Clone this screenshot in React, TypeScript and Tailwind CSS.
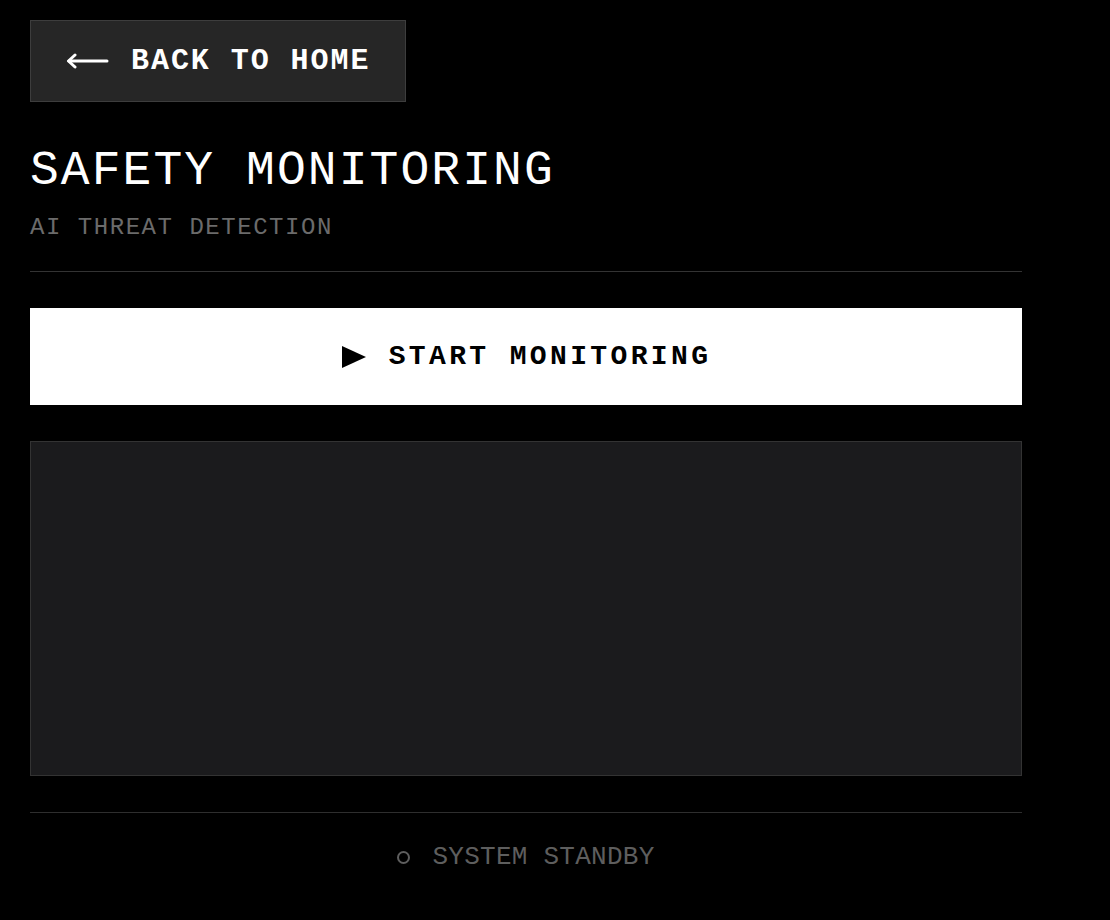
const mono = { fontFamily: '"Liberation Mono", "DejaVu Sans Mono", monospace' };

function ArrowLeft() {
  return (
    <svg width="43" height="16" viewBox="0 0 43 16" fill="none" stroke="currentColor" strokeWidth="3" strokeLinecap="round" strokeLinejoin="round">
      <path d="M41 8H3" />
      <path d="M9 2L2.5 8L9 14" />
    </svg>
  );
}

function PlayIcon() {
  return (
    <svg width="26" height="24" viewBox="0 0 26 24" fill="currentColor">
      <polygon points="1,1 25,12 1,23" />
    </svg>
  );
}

export default function App() {
  return (
    <div className="min-h-screen w-full bg-black px-[30px] pt-[20px] pb-10 text-white" style={mono}>
      <div className="flex w-[992px] flex-col">
        <div className="flex">
          <button className="flex h-[82px] items-center gap-[22px] border border-[#3d3d3d] bg-[#262626] pr-[35px] pl-[35px] text-[30px] leading-none font-bold tracking-[0.065em] text-white">
            <ArrowLeft />
            <span>BACK TO HOME</span>
          </button>
        </div>

        <h1 className="mt-[45px] text-5xl leading-none font-normal tracking-[0.043em] text-white">SAFETY MONITORING</h1>
        <p className="mt-[21px] text-2xl leading-none tracking-[0.064em] text-[#6b6b6b]">AI THREAT DETECTION</p>

        <div className="mt-[31px] h-px w-full bg-[#333333]" />

        <button className="mt-[36px] flex h-[97px] w-full items-center justify-center gap-[22px] bg-white text-[28px] leading-none font-bold tracking-[0.12em] text-black">
          <PlayIcon />
          <span>START MONITORING</span>
        </button>

        <div className="mt-[36px] h-[335px] w-full border border-[#333333] bg-[#1b1b1d]" />

        <div className="mt-[36px] h-px w-full bg-[#2e2e2e]" />

        <div className="mt-[31px] flex items-center justify-center gap-[22px] text-[26px] leading-none tracking-[0.01em] text-[#5e5e5e]">
          <span className="inline-block h-[13px] w-[13px] rounded-full border-2 border-[#5e5e5e]" />
          <span>SYSTEM STANDBY</span>
        </div>
      </div>
    </div>
  );
}
